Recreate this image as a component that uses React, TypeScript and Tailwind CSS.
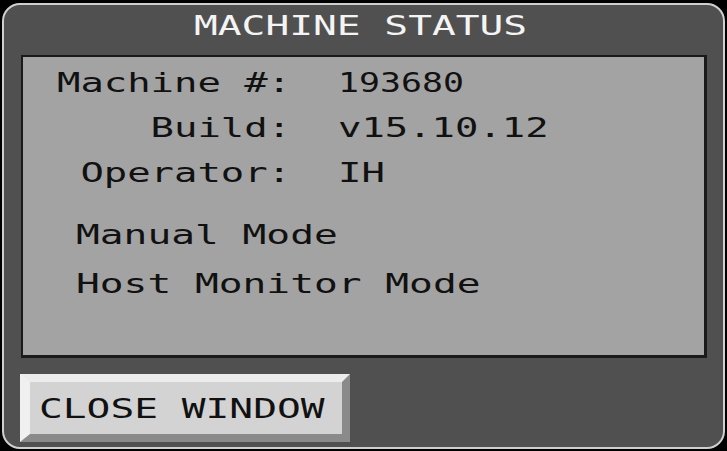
import React from "react";

const mono = "font-['DejaVu_Sans_Mono',monospace] text-[26px]";

function Row({ label, value, valueScale }: { label: string; value: string; valueScale: string }) {
  return (
    <div className="flex">
      <div className="w-[281px] shrink-0">
        <div className="whitespace-pre origin-left scale-x-[1.495]">{label}</div>
      </div>
      <div className={`whitespace-pre origin-left ${valueScale}`}>{value}</div>
    </div>
  );
}

export default function App() {
  return (
    <div className="w-[727px] h-[451px] bg-black overflow-hidden">
      <div className="ml-[2px] mt-[3px] w-[723px] h-[446px] rounded-[18px] border-2 border-[#cfcfcf] bg-[#505050] flex flex-col">
        <div className={`h-[50px] leading-[42px] text-center pr-[5px] text-[#f4f4f4] ${mono}`}>
          <span className="inline-block whitespace-pre scale-x-[1.52]">MACHINE STATUS</span>
        </div>
        <div className="ml-[17px] w-[686px] h-[303px] bg-[#a3a3a3] border-t-2 border-l-2 border-r-[3px] border-b-[3px] border-[#1a1a1a] pt-[4px] text-[#111111]">
          <div className={`pl-[34px] leading-[45px] ${mono}`}>
            <Row label="Machine #:" value="193680" valueScale="scale-x-[1.34]" />
            <Row label="    Build:" value="v15.10.12" valueScale="scale-x-[1.495]" />
            <Row label=" Operator:" value="IH" valueScale="scale-x-[1.495]" />
          </div>
          <div className={`pl-[53px] mt-[15px] leading-[49px] ${mono}`}>
            <div className="whitespace-pre origin-left scale-x-[1.52]">Manual Mode</div>
            <div className="whitespace-pre origin-left scale-x-[1.52]">Host Monitor Mode</div>
          </div>
        </div>
        <div className="mt-[16px] ml-[16px] w-[330px] h-[68px] bg-[#d3d3d3] border-l-[10px] border-t-[8px] border-r-[8px] border-b-[8px] border-l-[#f0f0f0] border-t-[#ececec] border-r-[#8a8a8a] border-b-[#8a8a8a] pl-[9px] text-[#111111]">
          <div className={`leading-[54px] whitespace-pre origin-left scale-x-[1.52] ${mono}`}>CLOSE WINDOW</div>
        </div>
      </div>
    </div>
  );
}
